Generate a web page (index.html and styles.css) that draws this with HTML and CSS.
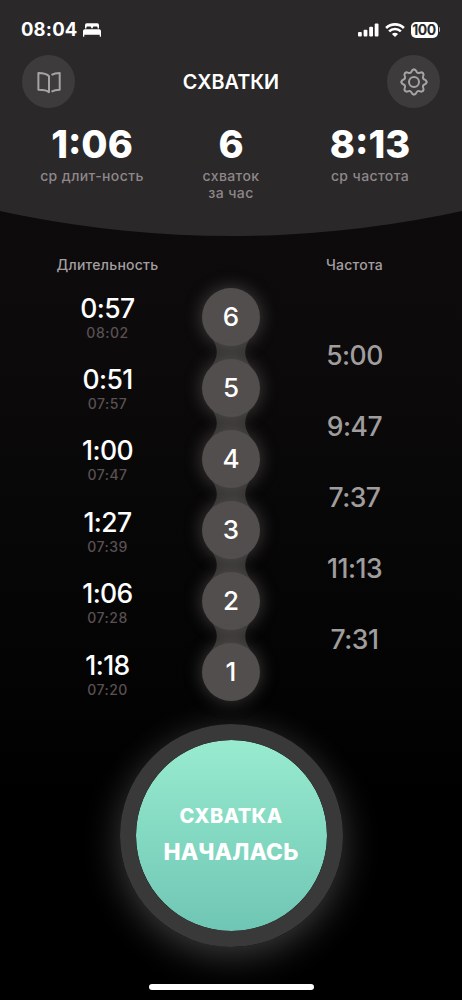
FILE: index.html
```
<!DOCTYPE html>
<html lang="ru">
<head>
<meta charset="utf-8">
<meta name="viewport" content="width=device-width, initial-scale=1">
<title>Схватки</title>
<link rel="stylesheet" href="styles.css">
</head>
<body>
<div class="app">
  <header class="header">
    <div class="status">
      <div class="status-left">
        <span class="clock">08:04</span>
        <svg class="bed" width="18" height="14" viewBox="0 0 18 14" fill="currentColor"><path d="M2 5.6V2.2Q2 .3 3.7.3H14.3Q16 .3 16 2.2V5.6H14.6V4.5Q14.6 3.5 13.6 3.5H10.8Q9.8 3.5 9.8 4.5V5.2H8.2V4.5Q8.2 3.5 7.2 3.5H4.4Q3.4 3.5 3.4 4.5V5.6Z"/><path d="M0 13.2V8Q0 6.2 1.8 6.2H16.2Q18 6.2 18 8V13.2Q18 13.8 17.4 13.8T16.7 13.2V11.8H1.3V13.2Q1.3 13.8.7 13.8T0 13.2Z"/></svg>
      </div>
      <div class="status-right">
        <svg width="21" height="14" viewBox="0 0 21 14" fill="currentColor"><rect x="0" y="9" width="3.8" height="4.6" rx="1"/><rect x="5.6" y="6.8" width="3.8" height="6.8" rx="1"/><rect x="11.2" y="3.8" width="3.8" height="9.8" rx="1"/><rect x="16.7" y=".4" width="3.8" height="13.2" rx="1"/></svg>
        <svg class="wifi" width="20" height="14" viewBox="0 0 20 14" fill="none" stroke="currentColor" stroke-width="2.6"><path d="M1.1 5Q4.8 1.4 10 1.4T18.9 5"/><path d="M4.1 8.4Q6.6 6 10 6T15.9 8.4"/><path d="M6.9 10.9Q10 8.5 13.1 10.9L10 14Z" fill="currentColor" stroke="none"/></svg>
        <div class="battery"><span class="battery-level">100</span><i class="battery-tip"></i></div>
      </div>
    </div>
    <nav class="nav">
      <button class="round" aria-label="Журнал"><svg width="26" height="26" viewBox="-13 -13 26 26" fill="none" stroke="currentColor" stroke-width="2" stroke-linejoin="round"><path d="M0 10.2V-5.9Q-2.6-9-10.6-9.1V7.8Q-2.8 7.7 0 10.2Z"/><path d="M2.5-7.2Q5.8-9.1 10.7-9.1V7.8Q5.8 7.8 2.5 9.6"/></svg></button>
      <h1 class="title">СХВАТКИ</h1>
      <button class="round" aria-label="Настройки"><svg width="30" height="30" viewBox="-15 -15 30 30" fill="none" stroke="currentColor" stroke-width="2" stroke-linecap="round"><defs><path id="tooth" d="M0-12.6C3-12.6 1.53-9.97 3.75-9.05C5.97-8.13 6.79-11.03 8.91-8.91"/></defs><use href="#tooth"/><use href="#tooth" transform="rotate(45)"/><use href="#tooth" transform="rotate(90)"/><use href="#tooth" transform="rotate(135)"/><use href="#tooth" transform="rotate(180)"/><use href="#tooth" transform="rotate(225)"/><use href="#tooth" transform="rotate(270)"/><use href="#tooth" transform="rotate(315)"/><circle r="5"/></svg></button>
    </nav>
    <section class="stats">
      <div class="stat"><b class="stat-value">1:06</b><span class="stat-label">ср длит-ность</span></div>
      <div class="stat"><b class="stat-value">6</b><span class="stat-label">схваток<br>за час</span></div>
      <div class="stat"><b class="stat-value">8:13</b><span class="stat-label">ср частота</span></div>
    </section>
  </header>

  <main class="log">
    <section class="column">
      <h2 class="heading">Длительность</h2>
      <div class="entry"><span class="time">0:57</span><span class="at">08:02</span></div>
      <div class="entry"><span class="time">0:51</span><span class="at">07:57</span></div>
      <div class="entry"><span class="time">1:00</span><span class="at">07:47</span></div>
      <div class="entry"><span class="time">1:27</span><span class="at">07:39</span></div>
      <div class="entry"><span class="time">1:06</span><span class="at">07:28</span></div>
      <div class="entry"><span class="time">1:18</span><span class="at">07:20</span></div>
    </section>
    <section class="chain">
      <div class="bead">6</div>
      <svg class="link" width="46" height="30" viewBox="0 0 46 30"><path d="M3 0H43Q37.2 8 37.2 15T43 30H3Q8.8 22 8.8 15T3 0Z"/></svg>
      <div class="bead">5</div>
      <svg class="link" width="46" height="30" viewBox="0 0 46 30"><path d="M3 0H43Q37.2 8 37.2 15T43 30H3Q8.8 22 8.8 15T3 0Z"/></svg>
      <div class="bead">4</div>
      <svg class="link" width="46" height="30" viewBox="0 0 46 30"><path d="M3 0H43Q37.2 8 37.2 15T43 30H3Q8.8 22 8.8 15T3 0Z"/></svg>
      <div class="bead">3</div>
      <svg class="link" width="46" height="30" viewBox="0 0 46 30"><path d="M3 0H43Q37.2 8 37.2 15T43 30H3Q8.8 22 8.8 15T3 0Z"/></svg>
      <div class="bead">2</div>
      <svg class="link" width="46" height="30" viewBox="0 0 46 30"><path d="M3 0H43Q37.2 8 37.2 15T43 30H3Q8.8 22 8.8 15T3 0Z"/></svg>
      <div class="bead">1</div>
    </section>
    <section class="column intervals">
      <h2 class="heading">Частота</h2>
      <div class="interval">5:00</div>
      <div class="interval">9:47</div>
      <div class="interval">7:37</div>
      <div class="interval">11:13</div>
      <div class="interval">7:31</div>
    </section>
  </main>

  <button class="start"><span class="start-top">СХВАТКА</span><span class="start-bottom">НАЧАЛАСЬ</span></button>
  <div class="home"></div>
</div>
</body>
</html>
```
FILE: styles.css
```
* { box-sizing: border-box; }
body { margin: 0; background: #000; }
button { padding: 0; border: 0; font: inherit; color: inherit; }
h1, h2 { margin: 0; }
svg { display: block; flex: none; }
.app {
  display: flex;
  flex-direction: column;
  align-items: center;
  width: 462px;
  height: 1000px;
  overflow: hidden;
  font-family: Inter, "Noto Sans", sans-serif;
  color: #fff;
  background: linear-gradient(#0e0c0d 0, #0c0a0b 350px, #040404 660px, #000 790px);
}
.header {
  width: 100%;
  height: 236px;
  flex: none;
  background: #2a2829;
  clip-path: circle(1080px at 50% -844px);
}
.status {
  display: flex;
  justify-content: space-between;
  height: 55px;
  padding: 20px 22px 0 21px;
}
.status-left, .status-right { display: flex; height: 19px; align-items: center; }
.clock { font-size: 18.5px; font-weight: 700; letter-spacing: .15px; line-height: 19px; }
.bed { margin-left: 6px; }
.wifi { margin: 0 6px; }
.battery { display: flex; align-items: center; gap: 1px; }
.battery-level {
  width: 27px;
  height: 16px;
  border-radius: 5px;
  background: #fff;
  color: #2a2829;
  font-size: 14px;
  font-weight: 700;
  line-height: 16px;
  text-align: center;
  letter-spacing: -.4px;
}
.battery-tip { width: 1.5px; height: 5px; border-radius: 0 2px 2px 0; background: #aaa; }
.nav {
  display: flex;
  align-items: center;
  justify-content: space-between;
  height: 53px;
  padding: 0 22px;
}
.round {
  display: flex;
  align-items: center;
  justify-content: center;
  width: 53px;
  height: 53px;
  border-radius: 50%;
  background: #3d3b3c;
  color: #a5a3a4;
}
.title { font-size: 19.8px; font-weight: 600; line-height: 24px; }
.stats {
  display: grid;
  grid-template-columns: 139px 139px 139px;
  justify-content: center;
  padding-top: 13.5px;
}
.stat { display: flex; flex-direction: column; align-items: center; }
.stat-value { height: 45.5px; font-size: 38px; font-weight: 800; line-height: 45px; }
.stat-label {
  font-size: 14px;
  font-weight: 550;
  line-height: 17px;
  letter-spacing: .4px;
  color: #8e8789;
  text-align: center;
}
.log {
  display: grid;
  grid-template-columns: 185px 62px 185px;
  justify-content: center;
  width: 100%;
  height: 488px;
  flex: none;
}
.column { display: flex; flex-direction: column; align-items: center; padding-top: 18px; }
.heading { height: 39px; font-size: 14px; font-weight: 550; line-height: 21px; letter-spacing: .25px; color: #a39fa0; }
.entry { display: flex; flex-direction: column; align-items: center; height: 71.2px; flex: none; }
.entry:last-child { padding-top: 1px; }
.time { font-size: 26.5px; font-weight: 550; line-height: 31px; letter-spacing: -.6px; }
.at { font-size: 14px; font-weight: 550; line-height: 18px; letter-spacing: .5px; color: #5a5052; }
.interval { height: 71px; font-size: 26.5px; font-weight: 550; line-height: 32px; letter-spacing: -.5px; color: #a09d9e; }
.intervals .heading { height: 85px; }
.chain { display: flex; flex-direction: column; align-items: center; padding-top: 51.5px; }
.bead {
  position: relative;
  z-index: 1;
  width: 58px;
  height: 58px;
  flex: none;
  border-radius: 50%;
  background: #524e4d;
  box-shadow: 0 0 18px rgba(150, 144, 140, .42);
  font-size: 26px;
  font-weight: 550;
  line-height: 58px;
  text-align: center;
}
.link { margin: -8.5px 0; fill: #302e2e; }
.start {
  display: flex;
  flex-direction: column;
  align-items: center;
  justify-content: center;
  width: 223px;
  height: 223px;
  padding-bottom: 4px;
  flex: none;
  border: 16.5px solid #393939;
  border-radius: 50%;
  background: linear-gradient(#98ebcf, #6fc6b4) padding-box;
  box-shadow: 0 8px 36px rgba(255, 255, 255, .24);
}
.start-top { font-size: 20px; font-weight: 800; line-height: 36px; letter-spacing: .4px; }
.start-bottom { font-size: 22.8px; font-weight: 800; line-height: 36px; letter-spacing: .1px; }
.home { width: 165px; height: 6px; margin-top: 37px; border-radius: 3px; background: #fff; flex: none; }
```
